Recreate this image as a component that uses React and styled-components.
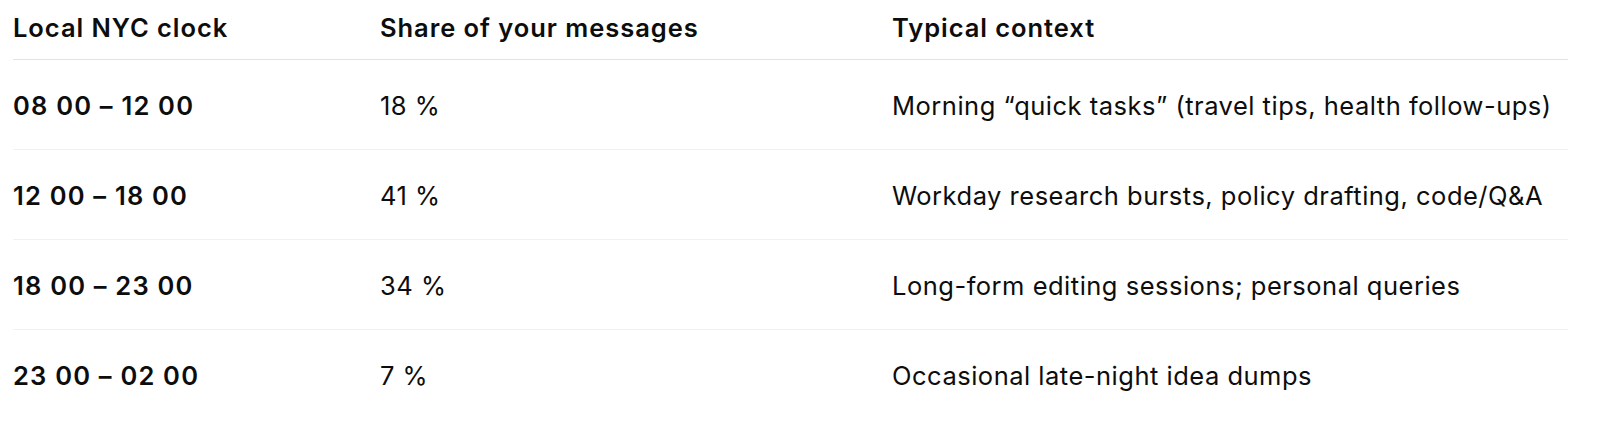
import React from 'react'
import styled, { createGlobalStyle } from 'styled-components'

const GlobalStyle = createGlobalStyle`
  html, body {
    margin: 0;
    padding: 0;
    background: #ffffff;
  }
  body {
    font-family: Inter, "Noto Sans", "Liberation Sans", sans-serif;
    color: #0d0d0d;
    -webkit-font-smoothing: antialiased;
  }
`

const Table = styled.div`
  width: 1555px;
  margin-left: 13px;
  display: flex;
  flex-direction: column;
`

const Row = styled.div`
  display: grid;
  grid-template-columns: 367px 512px 1fr;
  align-items: start;
  box-sizing: border-box;
  height: ${({ $head }) => ($head ? '60px' : '90px')};
  padding-top: ${({ $head }) => ($head ? '10px' : '28px')};
  border-bottom: 1px solid ${({ $head, $last }) => ($last ? 'transparent' : $head ? '#e3e3e3' : '#f1f1f1')};
`

const Cell = styled.div`
  font-size: 25.5px;
  line-height: 36px;
  letter-spacing: ${({ $bold }) => ($bold ? '1.2px' : '0.5px')};
  font-weight: ${({ $bold }) => ($bold ? 600 : 400)};
  white-space: nowrap;
`

const HeadCell = styled(Cell)`
  letter-spacing: 0.95px;
`

const columns = ['Local NYC clock', 'Share of your messages', 'Typical context']

const rows = [
  ['08 00 – 12 00', '18 %', 'Morning “quick tasks” (travel tips, health follow-ups)'],
  ['12 00 – 18 00', '41 %', 'Workday research bursts, policy drafting, code/Q&A'],
  ['18 00 – 23 00', '34 %', 'Long-form editing sessions; personal queries'],
  ['23 00 – 02 00', '7 %', 'Occasional late-night idea dumps'],
]

function App() {
  return (
    <>
      <GlobalStyle />
      <Table>
        <Row $head>
          {columns.map((c) => (
            <HeadCell key={c} $bold>{c}</HeadCell>
          ))}
        </Row>
        {rows.map((r, i) => (
          <Row key={r[0]} $last={i === rows.length - 1}>
            <Cell $bold>{r[0]}</Cell>
            <Cell>{r[1]}</Cell>
            <Cell>{r[2]}</Cell>
          </Row>
        ))}
      </Table>
    </>
  )
}

export default App
